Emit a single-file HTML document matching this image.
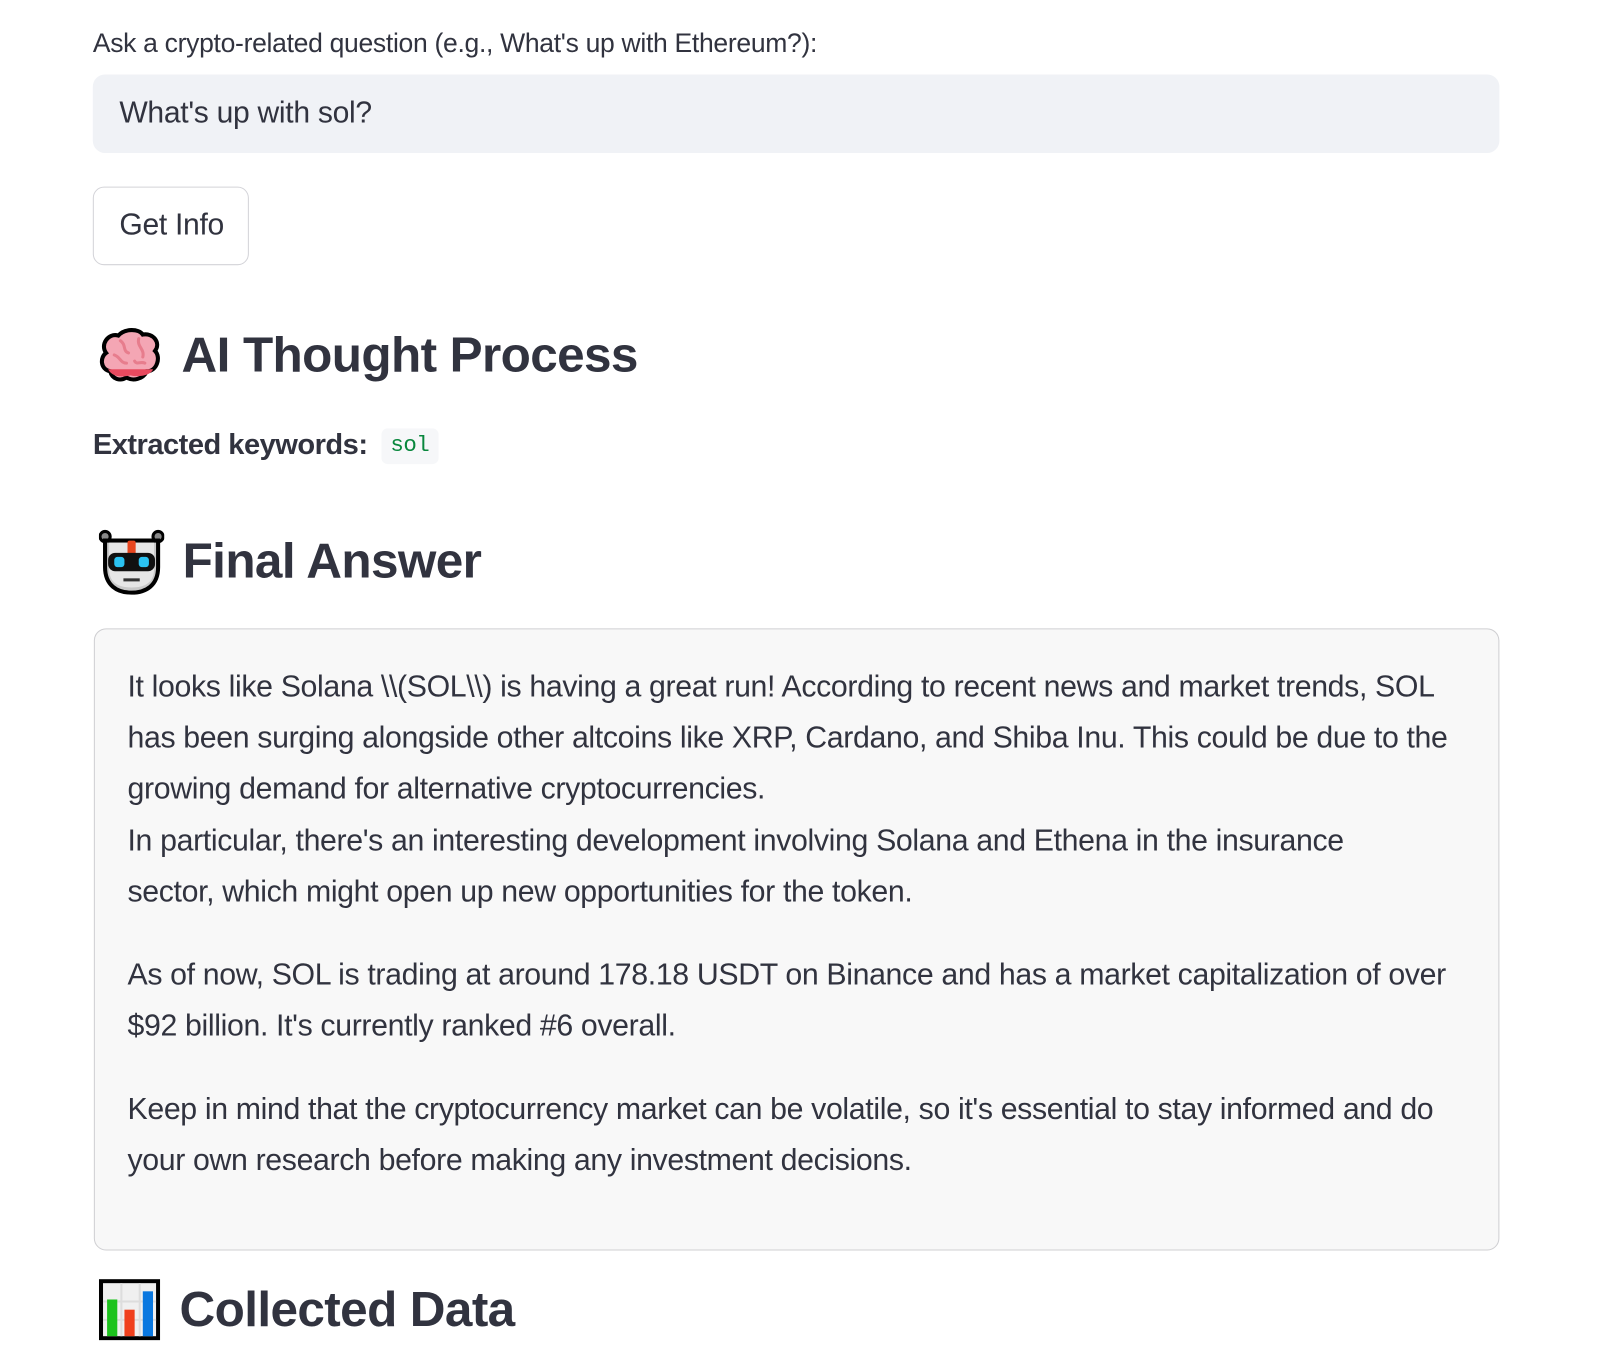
<!DOCTYPE html>
<html><head><meta charset="utf-8"><style>
body{margin:0;background:#fff;font-family:"Liberation Sans",sans-serif;color:#31333f;width:1600px;height:1350px;overflow:hidden;position:relative}
#w{position:absolute;left:0;top:0;width:1570px;height:1330px;transform:scale(1.02);transform-origin:0 0}
.a{position:absolute;white-space:nowrap}
.lbl{left:91px;top:27px;font-size:26px;letter-spacing:-0.3px}
.inp{left:91px;top:73px;width:1379px;height:77px;background:#f0f2f6;border-radius:12px}
.inp span{position:absolute;left:26px;top:21px;font-size:29.5px;letter-spacing:-0.3px}
.btn{left:91px;top:183px;width:151px;height:75px;border:1.5px solid #d3d3d8;border-radius:11px;background:#fff}
.btn span{position:absolute;left:25px;top:20px;font-size:29.5px;letter-spacing:-0.3px}
h2{margin:0;position:absolute;font-size:48.5px;font-weight:bold;letter-spacing:-0.6px;white-space:nowrap}
.kw{left:91px;top:420px;font-size:28.5px;font-weight:bold;letter-spacing:-0.5px}
.code{display:inline-block;background:#f6f7f9;border-radius:6px;padding:4px 9px 6px;margin-left:6px;font-family:"Liberation Mono",monospace;font-weight:normal;font-size:22px;color:#09873d;vertical-align:middle}
.box{left:92px;top:616px;width:1376px;height:608px;background:#f8f8f8;border:1.5px solid #cfcfd2;border-radius:12px}
.box .t{position:absolute;left:32px;font-size:29.7px;line-height:50.2px;letter-spacing:-0.35px;white-space:nowrap}
</style></head><body><div id="w">
<div class="a lbl">Ask a crypto-related question (e.g., What's up with Ethereum?):</div>
<div class="a inp"><span>What's up with sol?</span></div>
<div class="a btn"><span>Get Info</span></div>

<svg class="a" style="left:96px;top:320px" width="64" height="56" viewBox="0 0 64 56">
<path d="M12 44 C2 42 2 30 8 26 C2 18 10 6 20 9 C26 2 40 2 44 8 C54 6 62 16 56 24 C62 30 58 44 48 44 C44 52 34 54 28 50 C22 54 14 52 12 44Z" fill="#f4a6b4" stroke="#000" stroke-width="4"/>
<path d="M10 42 L54 42 C52 48 40 50 32 48 C24 50 14 50 10 42Z" fill="#e84a5f"/>
<path d="M22 14 C28 18 24 24 30 26 M40 12 C38 20 46 22 44 30 M16 28 C22 30 22 36 28 36 M46 36 C42 34 38 38 36 34" stroke="#e77d8d" stroke-width="3" fill="none" stroke-linecap="round"/>
</svg>
<h2 style="left:178px;top:320px">AI Thought Process</h2>

<div class="a kw">Extracted keywords: <span class="code">sol</span></div>

<svg class="a" style="left:97px;top:518px" width="64" height="66" viewBox="0 0 64 66">
<circle cx="6" cy="8" r="5" fill="#888" stroke="#000" stroke-width="3"/><circle cx="58" cy="8" r="5" fill="#888" stroke="#000" stroke-width="3"/>
<path d="M6 12 L6 38 C6 56 18 63 32 63 C46 63 58 56 58 38 L58 12 Z" fill="#c9c9c9" stroke="#000" stroke-width="4"/>
<path d="M10 14 L54 14 L54 40 C54 54 44 58 32 58 C20 58 10 54 10 40Z" fill="#e6e6e6"/>
<rect x="28" y="12" width="8" height="14" rx="2" fill="#e8461f"/>
<rect x="9" y="24" width="46" height="18" rx="7" fill="#111"/>
<rect x="15" y="28" width="10" height="10" rx="3" fill="#2bc3f2"/><rect x="39" y="28" width="10" height="10" rx="3" fill="#2bc3f2"/>
<rect x="24" y="49" width="16" height="3" fill="#333"/>
</svg>
<h2 style="left:179px;top:522px">Final Answer</h2>

<div class="a box">
<div class="t" style="top:32px">It looks like Solana \\(SOL\\) is having a great run! According to recent news and market trends, SOL<br>has been surging alongside other altcoins like XRP, Cardano, and Shiba Inu. This could be due to the<br>growing demand for alternative cryptocurrencies.<br>In particular, there's an interesting development involving Solana and Ethena in the insurance<br>sector, which might open up new opportunities for the token.</div>
<div class="t" style="top:314px">As of now, SOL is trading at around 178.18 USDT on Binance and has a market capitalization of over<br>$92 billion. It's currently ranked #6 overall.</div>
<div class="t" style="top:446px">Keep in mind that the cryptocurrency market can be volatile, so it's essential to stay informed and do<br>your own research before making any investment decisions.</div>
</div>

<svg class="a" style="left:97px;top:1254px" width="60" height="60" viewBox="0 0 60 60">
<rect x="2" y="2" width="56" height="56" fill="#f0f0f0" stroke="#000" stroke-width="4"/>
<path d="M22 4V56M40 4V56M4 22H56M4 40H56" stroke="#ddd" stroke-width="2"/>
<rect x="8" y="20" width="10" height="36" fill="#1dc31d"/>
<rect x="25" y="30" width="10" height="26" fill="#f0401d"/>
<rect x="43" y="12" width="10" height="44" fill="#0a78e0"/>
</svg>
<h2 style="left:176px;top:1256px">Collected Data</h2>
</div></body></html>
